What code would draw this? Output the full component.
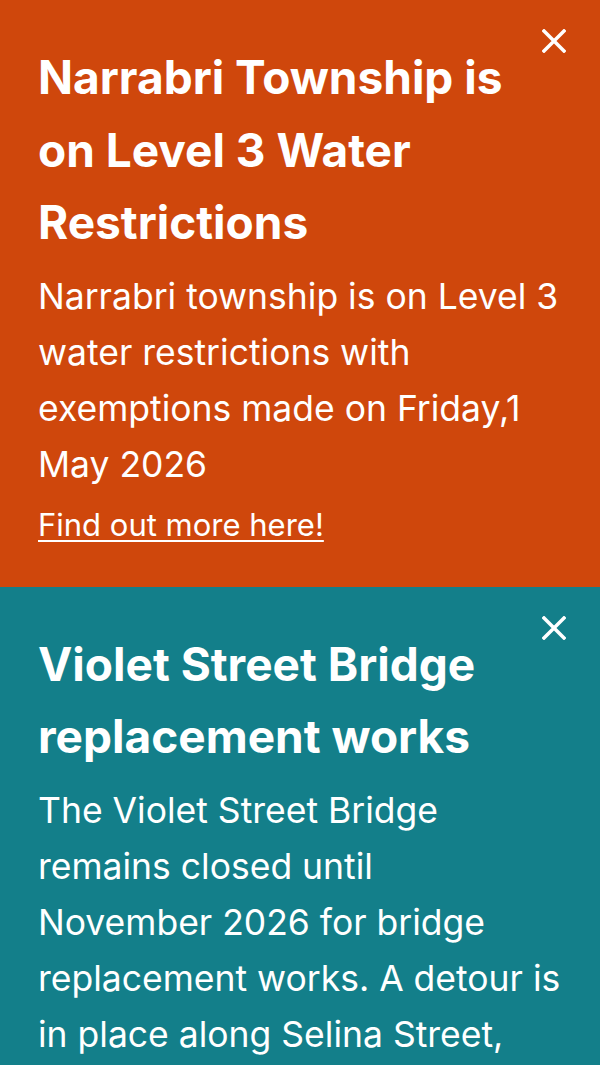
type Alert = {
  title: string;
  body: string;
  link?: string;
  bg: string;
};

const alerts: Alert[] = [
  {
    title: "Narrabri Township is on Level 3 Water Restrictions",
    body: "Narrabri township is on Level 3 water restrictions with exemptions made on Friday,1 May 2026",
    link: "Find out more here!",
    bg: "bg-[#cf470c]",
  },
  {
    title: "Violet Street Bridge replacement works",
    body: "The Violet Street Bridge remains closed until November\u00a02026 for bridge replacement works. A detour is in place along Selina Street, Cooma Road and Old Gunnedah Road.",
    bg: "bg-[#137f8a]",
  },
];

function CloseIcon() {
  return (
    <svg width="24" height="24" viewBox="0 0 24 24" fill="none" stroke="currentColor" strokeWidth="3.5" strokeLinecap="square">
      <path d="M2 2L22 22M22 2L2 22" />
    </svg>
  );
}

function AlertBanner({ alert }: { alert: Alert }) {
  return (
    <section className={`relative ${alert.bg} pl-[38px] pr-[32px] pt-[41px] pb-[42px] text-white`}>
      <button aria-label="Close alert" className="absolute right-[34px] top-[29px] text-white">
        <CloseIcon />
      </button>
      <h2 className="pr-[40px] text-[46px] font-bold leading-[72.5px]">{alert.title}</h2>
      <p className="mt-[10px] text-[35.5px] leading-[56px]">{alert.body}</p>
      {alert.link && (
        <a href="#" className="mt-[12px] block text-[31px] leading-[40px] underline decoration-[2px] underline-offset-[4px]">
          {alert.link}
        </a>
      )}
    </section>
  );
}

export default function App() {
  return (
    <div className="h-[1065px] w-[600px] overflow-hidden font-['Inter','Noto_Sans',sans-serif]">
      {alerts.map((a) => (
        <AlertBanner key={a.title} alert={a} />
      ))}
    </div>
  );
}
